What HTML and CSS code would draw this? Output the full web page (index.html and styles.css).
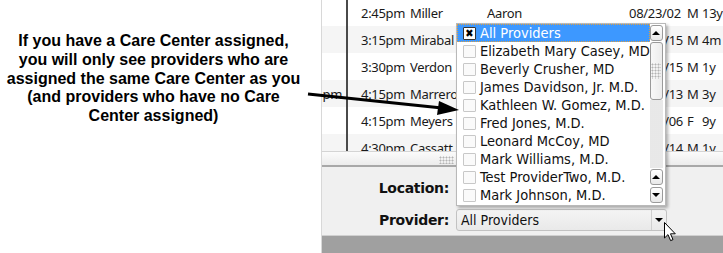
FILE: index.html
```html
<!DOCTYPE html>
<html lang="en">

<head>
  <meta charset="UTF-8">
  <meta name="viewport" content="width=device-width, initial-scale=1.0">
  <title>Provider filter</title>
  <link rel="stylesheet" href="styles.css">
</head>

<body>
  <div class="page">
    <div class="note">
      <p>If you have a Care Center assigned,<br>you will only see providers who are<br>assigned the same Care Center as you<br>(and providers who have no Care<br>Center assigned)</p>
    </div>

    <div class="app">
      <div class="grid">
        <div class="row"><span class="prev"></span><span class="bar"></span><span class="time">2:45pm</span><span>Miller</span><span>Aaron</span><span>08/23/02</span><span>M</span><span>13y</span></div>
        <div class="row alt"><span class="prev"></span><span class="bar"></span><span class="time">3:15pm</span><span>Mirabal</span><span></span><span class="date">/15</span><span>M</span><span>4m</span></div>
        <div class="row"><span class="prev"></span><span class="bar"></span><span class="time">3:30pm</span><span>Verdon</span><span></span><span class="date">/15</span><span>M</span><span>1y</span></div>
        <div class="row alt"><span class="prev">pm</span><span class="bar"></span><span class="time">4:15pm</span><span>Marrero</span><span></span><span class="date">/13</span><span>M</span><span>3y</span></div>
        <div class="row"><span class="prev"></span><span class="bar"></span><span class="time">4:15pm</span><span>Meyers</span><span></span><span class="date">/06</span><span>F</span><span>9y</span></div>
        <div class="row alt"><span class="prev"></span><span class="bar"></span><span class="time">4:30pm</span><span>Cassatt</span><span></span><span class="date">/14</span><span>M</span><span>1y</span></div>
      </div>
      <div class="splitter"><span class="grip"></span></div>
      <div class="form">
        <div class="field"><label>Location:</label></div>
        <div class="field">
          <label>Provider:</label>
          <div class="combo"><span class="value">All Providers</span><span class="drop"><i class="tri down"></i></span></div>
        </div>
      </div>
      <div class="status"></div>
    </div>
  </div>

  <div class="popup">
    <ul class="list">
      <li class="on"><span class="box checked">&#10006;</span>All Providers</li>
      <li><span class="box"></span>Elizabeth Mary Casey, MD</li>
      <li><span class="box"></span>Beverly Crusher, MD</li>
      <li><span class="box"></span>James Davidson, Jr. M.D.</li>
      <li><span class="box"></span>Kathleen W. Gomez, M.D.</li>
      <li><span class="box"></span>Fred Jones, M.D.</li>
      <li><span class="box"></span>Leonard McCoy, MD</li>
      <li><span class="box"></span>Mark Williams, M.D.</li>
      <li><span class="box"></span>Test ProviderTwo, M.D.</li>
      <li><span class="box"></span>Mark Johnson, M.D.</li>
    </ul>
    <div class="scroll">
      <div class="btn"><i class="tri up"></i></div>
      <div class="thumb"><span class="grip tall"></span></div>
      <div class="track"></div>
      <div class="btn"><i class="tri up"></i></div>
      <div class="btn"><i class="tri down"></i></div>
    </div>
  </div>

  <svg class="pointer-arrow" width="723" height="253" viewBox="0 0 723 253">
    <line x1="308" y1="94" x2="442" y2="108" stroke="#000" stroke-width="3" />
    <polygon points="459,110 439,101 437,115" fill="#000" />
  </svg>

  <svg class="cursor" width="14" height="21" viewBox="0 0 14 21">
    <path d="M0.5 0.5 L0.5 16 L4 12.6 L6.6 18.6 L9 17.6 L6.5 11.8 L11.3 11.8 Z" fill="#fff" stroke="#000" stroke-width="1" />
  </svg>
</body>

</html>
```

FILE: styles.css
```css
* {
  box-sizing: border-box;
}

body {
  margin: 0;
  width: 723px;
  height: 253px;
  overflow: hidden;
  background: #fff;
  position: relative;
}

.page {
  display: flex;
  height: 253px;
}

.note {
  width: 321px;
  padding: 32px 14px 0 0;
}

.note p {
  margin: 0;
  text-align: center;
  font-family: 'Liberation Sans', Arial, sans-serif;
  font-weight: bold;
  font-size: 16px;
  line-height: 18.75px;
  color: #000;
}

.app {
  width: 402px;
  display: flex;
  flex-direction: column;
  border-left: 1px solid #d8d8d8;
  background: #f0f0f0;
}

.grid {
  height: 151px;
  overflow: hidden;
  background: #fff;
  font-family: 'Noto Sans', 'Open Sans', sans-serif;
  font-size: 13px;
  letter-spacing: -0.3px;
  color: #1a1a1a;
}

.row {
  display: grid;
  grid-template-columns: 24px 2px 62px 77px 142px 58px 15px 1fr;
  height: 27px;
  align-items: center;
  white-space: nowrap;
}

.row:first-child {
  height: 26px;
}

.row.alt {
  background: #f5f5f5;
}

.row .time {
  padding-left: 13px;
}

.row .date {
  text-align: right;
  padding-right: 4px;
}

.row .prev {
  text-align: right;
  overflow: hidden;
  margin-right: 4px;
}

.row .bar {
  align-self: stretch;
  background: #4a4a4a;
}

.splitter {
  height: 16px;
  border-top: 1px solid #d4d4d4;
  border-bottom: 2px solid #a8a8a8;
  background: linear-gradient(#fbfbfb, #ececec);
  padding: 4px 0 0 117px;
}

.grip {
  display: block;
  width: 15px;
  height: 8px;
  background-image: radial-gradient(circle, #b4b4b4 0.9px, transparent 1.1px);
  background-size: 3px 3px;
}

.grip.tall {
  width: 10px;
  height: 16px;
}

.form {
  flex: 1;
  display: flex;
  flex-direction: column;
  padding: 8px 0 0 0;
  gap: 6px;
}

.field {
  display: flex;
  align-items: center;
  height: 26px;
}

.field label {
  width: 134px;
  text-align: right;
  padding-right: 7px;
  font-family: 'DejaVu Sans', sans-serif;
  font-weight: bold;
  font-size: 14px;
  letter-spacing: -0.3px;
  color: #111;
}

.combo {
  display: flex;
  width: 211px;
  height: 22px;
  border: 1px solid #c2c2c2;
  border-radius: 3px;
  background: linear-gradient(#f4f4f4, #e9e9e9);
  font-family: 'DejaVu Sans Condensed', 'DejaVu Sans', sans-serif;
  font-size: 14px;
  color: #111;
  align-items: center;
}

.combo .value {
  flex: 1;
  padding-left: 4px;
}

.combo .drop {
  width: 15px;
  align-self: stretch;
  border-left: 1px solid #cfcfcf;
  display: flex;
  align-items: center;
  justify-content: center;
}

.tri {
  display: block;
  width: 0;
  height: 0;
  border-left: 4px solid transparent;
  border-right: 4px solid transparent;
}

.tri.down {
  border-top: 4px solid #000;
}

.tri.up {
  border-bottom: 4px solid #000;
}

.status {
  height: 18px;
  border-top: 1px solid #d0d0d0;
  background: #a0a0a0;
}

.popup {
  position: absolute;
  left: 456px;
  top: 23px;
  width: 210px;
  height: 183px;
  display: flex;
  background: #fff;
  border: 1px solid #b9b9b9;
  box-shadow: 2px 2px 3px rgba(0, 0, 0, 0.3);
  padding: 0 1px 1px 0;
}

.list {
  list-style: none;
  margin: 0;
  padding: 0;
  width: 194px;
  font-family: 'DejaVu Sans Condensed', 'DejaVu Sans', sans-serif;
  font-size: 14.5px;
  color: #111;
}

.list li {
  display: flex;
  align-items: center;
  height: 18px;
  white-space: nowrap;
  overflow: hidden;
}

.list li.on {
  background: #3d98ff;
  color: #fff;
  outline: 1px dotted #e0a040;
  outline-offset: -1px;
}

.box {
  width: 13px;
  height: 13px;
  margin: 0 4px 0 6px;
  border: 1px solid #c8c8c8;
  border-radius: 1px;
  background: #fafafa;
  flex: none;
  font-size: 11px;
  line-height: 11px;
  text-align: center;
  color: #000;
}

.box.checked {
  background: #fff;
  border-color: #333;
  font-weight: bold;
}

.scroll {
  width: 14px;
  display: flex;
  flex-direction: column;
  margin-right: 1px;
}

.scroll .btn {
  height: 16px;
  margin: 1px 0;
  border: 1px solid #9a9a9a;
  border-radius: 3px;
  background: linear-gradient(#fff, #e8e8e8);
  display: flex;
  align-items: center;
  justify-content: center;
}

.scroll .thumb {
  height: 58px;
  border: 1px solid #9a9a9a;
  border-radius: 3px;
  background: linear-gradient(90deg, #f8f8f8, #ececec);
  display: flex;
  align-items: center;
  justify-content: center;
}

.scroll .track {
  flex: 1;
  background-image: radial-gradient(circle, #d6d6d6 0.6px, transparent 0.8px);
  background-size: 2px 2px;
  background-color: #f7f7f7;
}

.pointer-arrow {
  position: absolute;
  left: 0;
  top: 0;
  pointer-events: none;
}

.cursor {
  position: absolute;
  left: 664px;
  top: 222px;
}
```
